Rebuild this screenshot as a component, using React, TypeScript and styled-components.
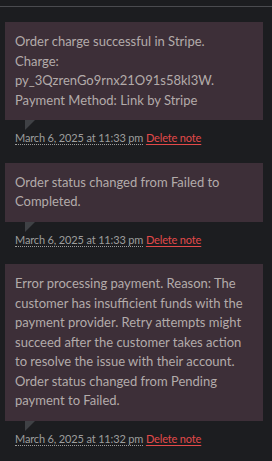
import React from "react";
import styled, { createGlobalStyle } from "styled-components";

const Global = createGlobalStyle`
  html, body { margin: 0; padding: 0; background: #1c1d20; }
  body { font-family: "Lato", "Noto Sans", sans-serif; }
`;

const Panel = styled.div`
  width: 272px;
  height: 461px;
  box-sizing: border-box;
  padding-top: 6px;
  background: #1c1d20;
  overflow: hidden;
`;

const Rule = styled.div`
  height: 1px;
  background: #4a4b4f;
`;

const NotesList = styled.ul`
  list-style: none;
  margin: 0;
  padding: 15px 9px 0 5px;
`;

const Note = styled.li`
  margin: 0 0 6px;
`;

const NoteContent = styled.div`
  position: relative;
  background: #3d2f38;
  padding: 10px;
  color: #b3abaa;
  font-size: 13px;
  line-height: 19.5px;

  &::after {
    content: "";
    position: absolute;
    bottom: -10px;
    left: 20px;
    width: 0;
    height: 0;
    border-style: solid;
    border-width: 10px 10px 0 0;
    border-color: #3f4145 transparent;
  }
`;

const NoteText = styled.p`
  margin: 0;
  white-space: nowrap;
`;

const Meta = styled.p`
  margin: 0;
  padding: 10px;
  font-size: 11px;
  line-height: 16.5px;
  color: #9d9d9d;
  letter-spacing: -0.15px;
`;

const Stamp = styled.abbr`
  text-decoration: none;
  border-bottom: 1px dotted #9d9d9d;
`;

const DeleteLink = styled.a`
  color: #e24a4a;
  text-decoration: underline;
  text-underline-offset: 2px;
  cursor: pointer;
`;

type NoteData = { lines: string[]; time: string };

const notes: NoteData[] = [
  {
    lines: [
      "Order charge successful in Stripe.",
      "Charge:",
      "py_3QzrenGo9rnx21O91s58kl3W.",
      "Payment Method: Link by Stripe",
    ],
    time: "March 6, 2025 at 11:33 pm",
  },
  {
    lines: ["Order status changed from Failed to", "Completed."],
    time: "March 6, 2025 at 11:33 pm",
  },
  {
    lines: [
      "Error processing payment. Reason: The",
      "customer has insufficient funds with the",
      "payment provider. Retry attempts might",
      "succeed after the customer takes action",
      "to resolve the issue with their account.",
      "Order status changed from Pending",
      "payment to Failed.",
    ],
    time: "March 6, 2025 at 11:32 pm",
  },
];

export default function App() {
  return (
    <>
      <Global />
      <Panel>
        <Rule />
        <NotesList>
          {notes.map((n, i) => (
            <Note key={i}>
              <NoteContent>
                <NoteText>
                  {n.lines.map((l, j) => (
                    <React.Fragment key={j}>
                      {l}
                      {j < n.lines.length - 1 && <br />}
                    </React.Fragment>
                  ))}
                </NoteText>
              </NoteContent>
              <Meta>
                <Stamp title={n.time}>{n.time}</Stamp>{" "}
                <DeleteLink>Delete note</DeleteLink>
              </Meta>
            </Note>
          ))}
        </NotesList>
      </Panel>
    </>
  );
}
